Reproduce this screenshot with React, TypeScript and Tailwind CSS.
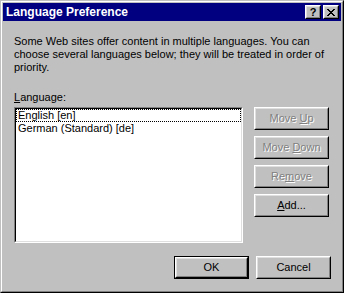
import type { ReactNode } from "react";

const font = "font-['Liberation_Sans',Arial,sans-serif]";

function Raised({ children, className = "" }: { children: ReactNode; className?: string }) {
  return (
    <div className={`border border-t-white border-l-white border-r-black border-b-black bg-[#c0c0c0] ${className}`}>
      <div className="h-full w-full border border-t-[#dfdfdf] border-l-[#dfdfdf] border-r-[#808080] border-b-[#808080] flex items-center justify-center">
        {children}
      </div>
    </div>
  );
}

function Button({
  children,
  disabled,
  isDefault,
}: {
  children: ReactNode;
  disabled?: boolean;
  isDefault?: boolean;
}) {
  const label = (
    <span
      className={`text-[11px] leading-[13px] ${
        disabled ? "text-[#808080] [text-shadow:1px_1px_0_#ffffff]" : "text-black"
      }`}
    >
      {children}
    </span>
  );
  if (isDefault) {
    return (
      <div className="w-[75px] h-[23px] border border-black">
        <Raised className="h-full w-full">{label}</Raised>
      </div>
    );
  }
  return <Raised className="w-[75px] h-[23px]">{label}</Raised>;
}

function TitleButton({ children }: { children: ReactNode }) {
  return <Raised className="w-[16px] h-[14px]">{children}</Raised>;
}

export default function App() {
  return (
    <div className={`w-[344px] h-[293px] ${font} text-black`}>
      {/* рамка окна */}
      <div className="h-full w-full border border-t-[#c0c0c0] border-l-[#c0c0c0] border-r-black border-b-black">
        <div className="h-full w-full border border-t-white border-l-white border-r-[#808080] border-b-[#808080] bg-[#c0c0c0] p-[1px] flex flex-col">
          {/* заголовок */}
          <div className="h-[18px] bg-[#000080] flex items-center justify-between pl-[3px] pr-[2px]">
            <span className="text-white font-bold text-[12px] leading-[14px]">Language Preference</span>
            <div className="flex gap-[2px]">
              <TitleButton>
                <span className="font-bold text-[11px] leading-[11px] text-black">?</span>
              </TitleButton>
              <TitleButton>
                <svg width="8" height="7" viewBox="0 0 8 7" shapeRendering="crispEdges">
                  <path
                    d="M0 0h2v1h-2zM6 0h2v1h-2zM1 1h2v1h-2zM5 1h2v1h-2zM2 2h4v1h-4zM3 3h2v1h-2zM2 4h4v1h-4zM1 5h2v1h-2zM5 5h2v1h-2zM0 6h2v1h-2zM6 6h2v1h-2z"
                    fill="#000"
                  />
                </svg>
              </TitleButton>
            </div>
          </div>

          {/* содержимое */}
          <div className="flex flex-col pl-[11px] pr-[10px] pt-[14px] text-[11px] leading-[13px]">
            <p className="whitespace-nowrap">
              Some Web sites offer content in multiple languages. You can
              <br />
              choose several languages below; they will be treated in order of
              <br />
              priority.
            </p>

            <div className="mt-[17px]">
              <u>L</u>anguage:
            </div>

            <div className="mt-[3px] flex gap-[11px]">
              <div className="w-[229px] h-[136px] border border-t-[#808080] border-l-[#808080] border-r-white border-b-white">
                <div className="h-full w-full border border-t-black border-l-black border-r-[#dfdfdf] border-b-[#dfdfdf] bg-white">
                  <div className="h-[13px] border border-dotted border-black pl-[1px] leading-[11px]">English [en]</div>
                  <div className="h-[13px] pl-[2px] leading-[13px]">German (Standard) [de]</div>
                </div>
              </div>
              <div className="flex flex-col gap-[6px]">
                <Button disabled>
                  Move <u>U</u>p
                </Button>
                <Button disabled>
                  Move <u>D</u>own
                </Button>
                <Button disabled>
                  Re<u>m</u>ove
                </Button>
                <Button>
                  <u>A</u>dd...
                </Button>
              </div>
            </div>

            <div className="mt-[13px] flex justify-end gap-[7px]">
              <Button isDefault>OK</Button>
              <Button>Cancel</Button>
            </div>
          </div>
        </div>
      </div>
    </div>
  );
}
